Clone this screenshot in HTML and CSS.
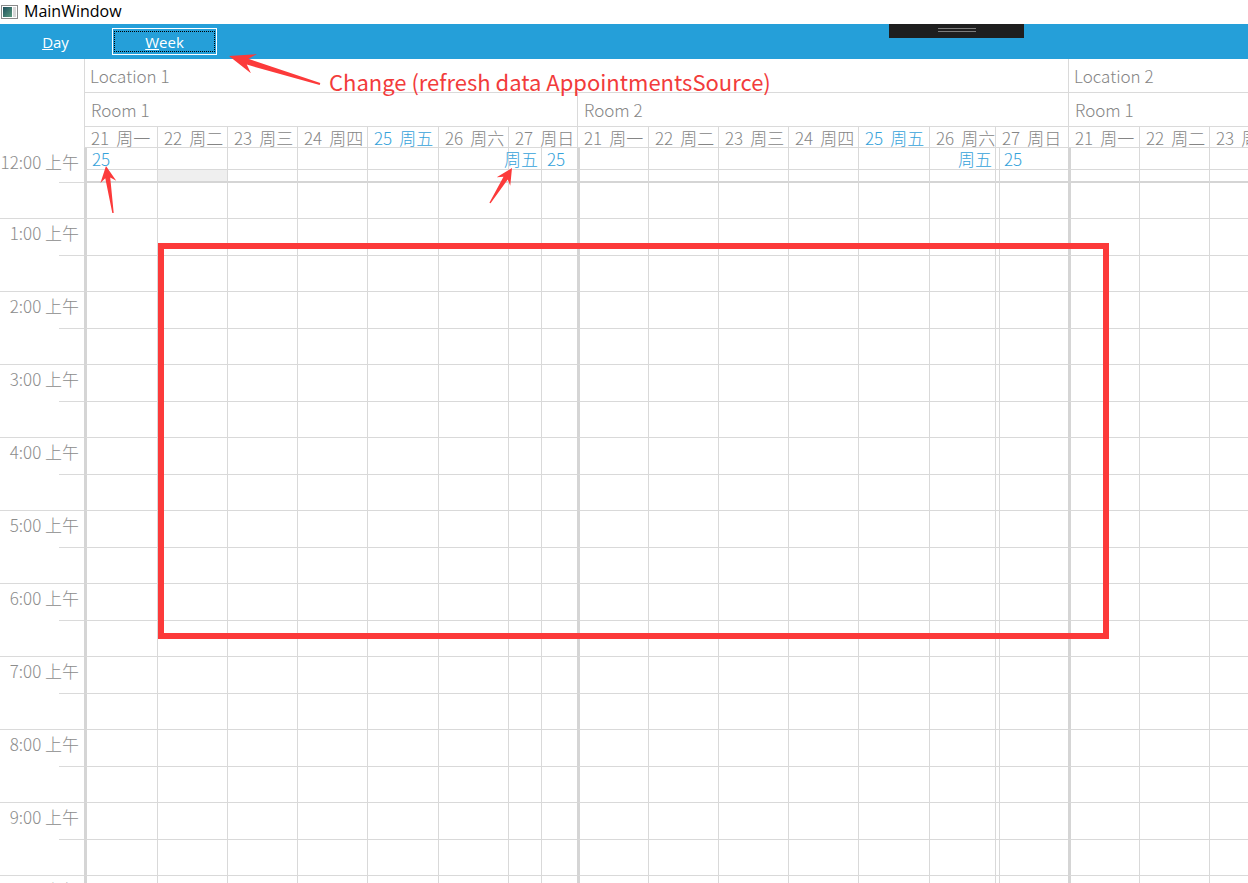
FILE: index.html
```html
<!DOCTYPE html>
<html lang="zh-CN">
<head>
    <meta charset="UTF-8">
    <title>MainWindow</title>
    <link rel="stylesheet" href="styles.css">
</head>
<body>
    <div class="titlebar">
        <svg class="app-icon" width="18" height="16" viewBox="0 0 18 16">
            <defs>
                <linearGradient id="iconFill" x1="0" y1="0" x2="1" y2="1">
                    <stop offset="0" stop-color="#1f4f5c"/>
                    <stop offset="1" stop-color="#5a9a7e"/>
                </linearGradient>
            </defs>
            <rect x="0.5" y="1.5" width="16" height="13" fill="#fff" stroke="#8a8a8a"/>
            <rect x="2" y="3" width="9" height="10" fill="url(#iconFill)"/>
            <rect x="12" y="3" width="3" height="10" fill="#d8d8d8"/>
        </svg>
        <span>MainWindow</span>
    </div>

    <div class="toolbar">
        <button class="view-btn"><u>D</u>ay</button>
        <button class="view-btn selected"><span class="focus-ring"><u>W</u>eek</span></button>
        <div class="debug-bar"></div>
    </div>

    <div class="scheduler" id="scheduler"></div>

    <!-- marks drawn on top of the scheduler -->
    <svg class="marks" width="1248" height="883">
        <rect x="161" y="246" width="945" height="390" fill="none" stroke="#fc3a3a" stroke-width="6"/>
        <polygon transform="translate(320 84) rotate(197.1)" fill="#fc3a3a"
                 points="0,-1 75.7,-3 69.2,-10 95.2,0 69.2,10 75.7,3 0,1"/>
        <polygon transform="translate(113 213) rotate(-98.5)" fill="#fc3a3a"
                 points="0,-0.7 35.5,-2.5 31.5,-8 47.5,0 31.5,8 35.5,2.5 0,0.7"/>
        <polygon transform="translate(490 203) rotate(-57.8)" fill="#fc3a3a"
                 points="0,-0.7 29.3,-2.5 25.3,-8 41.3,0 25.3,8 29.3,2.5 0,0.7"/>
    </svg>
    <div class="callout">Change (refresh data AppointmentsSource)</div>

    <script>
        var grid = document.getElementById("scheduler");
        var GROUPS = [0, 8, 16];      // first track of each room
        var TRACKS = 19;
        var ROWS = 26;

        function cell(cls, row, col, html) {
            var d = document.createElement("div");
            d.className = cls;
            d.style.gridRow = row;
            d.style.gridColumn = col;
            if (html) d.innerHTML = html;
            grid.appendChild(d);
            return d;
        }
        function span(from, to) {
            return (from + 2) + " / " + (to + 2);
        }

        // resource headers
        cell("head location", 1, span(0, 16), "Location 1");
        cell("head location", 1, span(16, 19), "Location 2");
        cell("head room", 2, span(0, 8), "Room 1");
        cell("head room", 2, span(8, 16), "Room 2");
        cell("head room", 2, span(16, 19), "Room 1");

        // day headers, edges are track indexes per room
        var week = [[21, "周一"], [22, "周二"], [23, "周三"], [24, "周四"], [25, "周五"], [26, "周六"], [27, "周日"]];
        var edges = [[0, 1, 2, 3, 4, 5, 6, 8], [8, 9, 10, 11, 12, 13, 14, 16], [16, 17, 18, 19]];
        edges.forEach(function (e) {
            for (var i = 0; i < e.length - 1; i++) {
                var d = week[i];
                cell("head day" + (d[0] === 25 ? " today" : ""), 3, span(e[i], e[i + 1]),
                    '<span class="day-num">' + d[0] + '</span><span class="day-name">' + d[1] + '</span>');
            }
        });

        // time ruler
        var hours = ["12:00", "1:00", "2:00", "3:00", "4:00", "5:00", "6:00", "7:00", "8:00", "9:00", "10:00"];
        hours.forEach(function (h, i) {
            var top = i === 0 ? "4 / 6" : (5 + 2 * i);
            cell("time-label", top, "1", h + " 上午");
            cell("time-half", 6 + 2 * i, "1");
        });

        // slots
        var appts = { 0: ["25", ""], 6: ["周五", "end"], 7: ["25", ""], 13: ["周五", "end"], 15: ["25", "narrow"] };
        for (var r = 4; r <= ROWS; r++) {
            for (var t = 0; t < TRACKS; t++) {
                var cls = "slot";
                if (GROUPS.indexOf(t) >= 0) cls += " group";
                if (r === 4) cls += " allday";
                if (r === 5) cls += " allday-end";
                if (r === 5 && t === 1) cls += " shaded";
                var html = "";
                if (r === 4 && appts[t]) {
                    if (appts[t][1]) cls += " " + appts[t][1];
                    html = '<span class="appt">' + appts[t][0] + '</span>';
                }
                cell(cls, r, span(t, t + 1), html);
            }
        }
    </script>
</body>
</html>
```

FILE: styles.css
```css
html, body {
    margin: 0;
    padding: 0;
}
body {
    position: relative;
    width: 1248px;
    height: 883px;
    overflow: hidden;
    background: #fff;
    font-family: "Noto Sans CJK SC", sans-serif;
}

.titlebar {
    height: 24px;
    box-sizing: border-box;
    padding: 0 0 3px 1px;
    display: flex;
    align-items: center;
    gap: 5px;
    font-family: "Open Sans", sans-serif;
    font-size: 16px;
    color: #000;
}
.app-icon {
    display: block;
    margin-top: 2px;
}

.toolbar {
    position: relative;
    height: 35px;
    background: #259fd9;
    display: flex;
    align-items: center;
    gap: 4px;
    padding-left: 3px;
}
.view-btn {
    width: 105px;
    height: 27px;
    padding: 0;
    background: transparent;
    border: 1px solid transparent;
    color: #fff;
    font-family: "Open Sans", sans-serif;
    font-size: 15px;
    cursor: pointer;
}
.view-btn.selected {
    border-color: #fff;
}
.focus-ring {
    display: block;
    margin: 1px;
    height: 21px;
    box-sizing: border-box;
    padding-top: 1px;
    line-height: 19px;
    border: 1px dotted #000;
}
.debug-bar {
    position: absolute;
    left: 889px;
    top: 0;
    width: 135px;
    height: 14px;
    background: #1e1e1e;
}
.debug-bar::after {
    content: "";
    position: absolute;
    left: 49px;
    top: 4px;
    width: 38px;
    height: 2px;
    border-top: 1px solid #7c7c7c;
    border-bottom: 1px solid #7c7c7c;
}

.scheduler {
    display: grid;
    grid-template-columns: 84px 73px 70px 70px 70px 71px 70px 33px 36px 71px 70px 70px 70px 71px 66px 4px 69px 71px 70px 70px;
    grid-template-rows: 34px 34px 21px 22px 13px 36px repeat(20, 36.5px);
    height: 824px;
    overflow: hidden;
    color: #858585;
    font-weight: 300;
}
.scheduler > div {
    box-sizing: border-box;
    min-width: 0;
}

.head {
    display: flex;
    align-items: center;
    white-space: nowrap;
    border-left: 1px solid #dadada;
    border-bottom: 1px solid #dadada;
    font-size: 17px;
    line-height: 19px;
}
.location {
    padding-left: 5px;
}
.room {
    padding-left: 6px;
}
.day {
    padding-left: 6px;
}
.day-num {
    margin-right: 7px;
}
.day.today {
    color: #35a2da;
}

.time-label {
    padding: 4px 5px 0 0;
    text-align: right;
    white-space: nowrap;
    font-size: 17px;
    line-height: 20px;
    color: #8c8c8c;
    background: linear-gradient(#dadada, #dadada) no-repeat right bottom / 25px 1px;
}
.time-half {
    border-bottom: 1px solid #dadada;
}

.slot {
    border-left: 1px solid #d9d9d9;
    border-bottom: 1px solid #d9d9d9;
}
.slot.group {
    border-left: 3px solid #d5d5d5;
}
.slot.allday-end {
    border-bottom: 2px solid #d5d5d5;
}
.slot.shaded {
    background: #efefef;
}
.slot.allday {
    display: flex;
    align-items: center;
    padding-left: 5px;
    font-size: 17px;
    line-height: 19px;
    white-space: nowrap;
}
.slot.allday.end {
    justify-content: flex-end;
    padding-right: 3px;
}
.slot.allday.narrow {
    padding-left: 4px;
}
.appt {
    color: #35a2da;
}

.marks {
    position: absolute;
    left: 0;
    top: 0;
    pointer-events: none;
}
.callout {
    position: absolute;
    left: 329px;
    top: 67px;
    font-size: 22px;
    line-height: 28px;
    color: #f23b3b;
    white-space: nowrap;
}
```
